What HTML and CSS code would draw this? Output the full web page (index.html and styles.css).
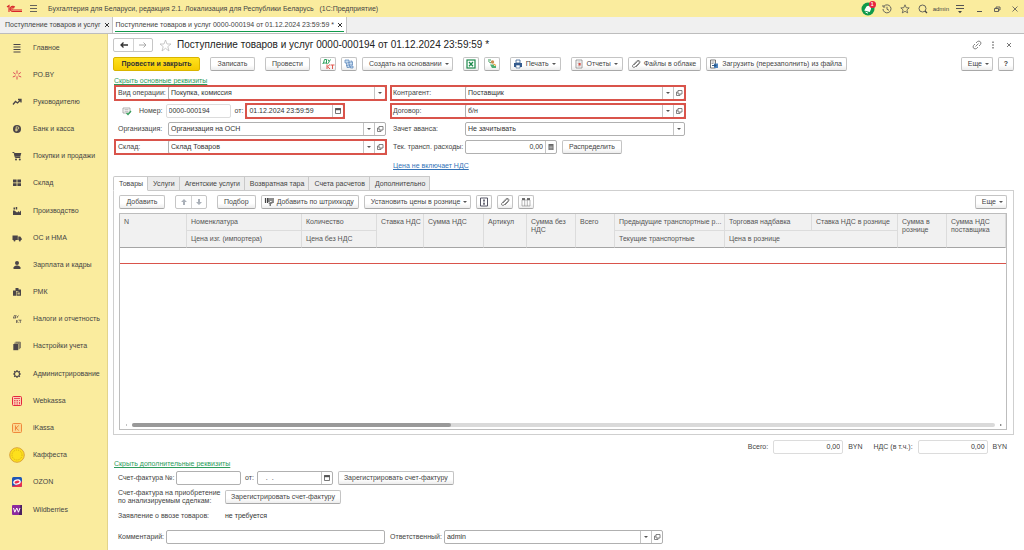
FILE: index.html
```html
<!DOCTYPE html>
<html lang="ru">
<head>
<meta charset="utf-8">
<title>Поступление товаров и услуг</title>
<link rel="stylesheet" href="styles.css">
</head>
<body>
<svg class="sprite" aria-hidden="true">
  <symbol id="open" viewBox="0 0 8 8"><path d="M3 1.500h4v3.500H3zM3 3H1.500v3.500H5V5" fill="none" stroke="#666" stroke-width=".8"/></symbol>
  <symbol id="cal" viewBox="0 0 8 8"><path d="M1.500 1.500h5v5h-5z" fill="none" stroke="#555" stroke-width=".8"/><path d="M1.200 1.200h5.600v2H1.200z" fill="#555"/></symbol>
  <symbol id="clip" viewBox="0 0 10 10"><path d="M3 6l3.500-3.500q1-.8 1.600 0t-.2 1.700L4 8Q2.600 9 1.800 8T2 6l3.500-3.800Q7 .8 8.300 1.700T8.500 4.500L5 8" fill="none" stroke="#777" stroke-width=".9"/></symbol>
  <symbol id="dtkt" viewBox="0 0 14 12"><path d="M2 5h4M2.500 5L3.500 1.500H5.500V5M2 5v1M6 5v1M7 1.500l1.200 2L9.500 1.500M8.200 3.500L7.200 5.500" fill="none" stroke="#2aa05a"/><path d="M6 6.500v4.500M9 6.500L6.500 8.700 9 11M9.500 7h4M11.500 7v4" fill="none" stroke="#e0574d"/></symbol>
</svg>
<div class="app">
  <header class="topbar">
    <svg class="logo" viewBox="0 0 17 10"><path d="M1 3l2-1.500V8M8.800 3.200A2.600 2.600 0 1 0 7 7.500h9M8 4.200A1.200 1.200 0 1 0 7 6h9" fill="none" stroke="#d8232a" stroke-width="1.100"/></svg>
    <svg class="burger" viewBox="0 0 9 9"><path d="M1 1.500h7M1 4.500h7M1 7.500h7" stroke="#555" stroke-width=".9"/></svg>
    <span class="app-name">Бухгалтерия для Беларуси, редакция 2.1. Локализация для Республики Беларусь&nbsp;&nbsp; (1С:Предприятие)</span>
    <div class="top-tools">
      <span class="bell"><svg viewBox="0 0 14 14"><circle cx="7" cy="7" r="6.500" fill="#109a4b"/><path d="M3.200 8.500L5.500 4.500Q7 3 8.800 4.200T10 7L8.800 10z" fill="#fff"/><path d="M4.500 10l2.500 1.200" stroke="#fff"/></svg><b>1</b></span>
      <svg viewBox="0 0 10 10"><path d="M2 2.200A4 4 0 1 1 1 5M1 1v2h2.200M5 2.800V5.300l2 1" fill="none" stroke="#555" stroke-width=".9"/></svg>
      <svg viewBox="0 0 10 10"><path d="M5 .8l1.200 2.900 3 .2-2.300 2 .8 3L5 7.300 2.300 8.900l.8-3-2.300-2 3-.2z" fill="none" stroke="#555" stroke-width=".8"/></svg>
      <svg viewBox="0 0 10 10"><circle cx="4.500" cy="4.500" r="3.500" fill="none" stroke="#555" stroke-width=".9"/><path d="M7 7l2 2" stroke="#444" stroke-width="1.200"/></svg>
      <span class="user">admin</span>
      <svg class="opts" viewBox="0 0 10 10"><path d="M1 1.500h8M1 4.500h8" stroke="#555"/><path d="M3 7h4L5 9.200z" fill="#444"/></svg>
      <svg class="win" viewBox="0 0 8 8"><path d="M2 6.500h5" stroke="#555"/></svg>
      <svg class="win" viewBox="0 0 8 8"><path d="M1.500 3.500h4v3h-4zM3 3.500V2h4v3H5.500" fill="none" stroke="#555" stroke-width=".9"/></svg>
      <svg class="win" viewBox="0 0 8 8"><path d="M1.500 1.500l5 5M6.500 1.500l-5 5" stroke="#555" stroke-width=".8"/></svg>
    </div>
  </header>
  <div class="windows">
    <a class="wtab" href="#">Поступление товаров и услуг<svg viewBox="0 0 6 6"><path d="M1 1l4 4M5 1L1 5" stroke="#333"/></svg></a>
    <a class="wtab current" href="#">Поступление товаров и услуг 0000-000194 от 01.12.2024 23:59:59 *<svg viewBox="0 0 6 6"><path d="M1 1l4 4M5 1L1 5" stroke="#333"/></svg></a>
  </div>
  <div class="body">
    <nav class="side">
      <a href="#"><svg viewBox="0 0 10 10"><path d="M1.500 1.500h7M1.500 4h7M1.500 6.500h7M1.500 9h7" stroke="#4a4548"/></svg>Главное</a>
      <a href="#"><svg viewBox="0 0 10 10"><path d="M5 .5v3.200M5 6.300v3.200M1.200 2.500l2.500 1.700M8.800 2.500L6.300 4.200M.8 7l2.800-1.200M9.200 7L6.400 5.800" stroke="#dc4a58"/></svg>РО.BY</a>
      <a href="#"><svg viewBox="0 0 10 10"><path d="M1 7.500l2.500-3 2 1.500 3-3M6 2.500h3v3" fill="none" stroke="#4a4548" stroke-width="1.300"/></svg>Руководителю</a>
      <a href="#"><svg viewBox="0 0 10 10"><circle cx="5" cy="5" r="4" fill="#4a4548"/><path d="M4.200 7.500V2.800h1.300q1.300 0 1.300 1.200T5.500 5.200H3.200M3.200 6.300h2.600" fill="none" stroke="#faec9e" stroke-width=".7"/></svg>Банк и касса</a>
      <a href="#"><svg viewBox="0 0 10 10"><path d="M.5 1.500h1.600l1.200 5h5" fill="none" stroke="#4a4548"/><path d="M2.300 2h7l-1 3.800H3.200z" fill="#4a4548"/><circle cx="4" cy="8.500" r="1" fill="#4a4548"/><circle cx="7.800" cy="8.500" r="1" fill="#4a4548"/></svg>Покупки и продажи</a>
      <a href="#"><svg viewBox="0 0 10 10"><path d="M1 1.500h3.600v3H1zM5.400 1.500H9v3H5.400zM1 5.200h3.600v2.800H1zM5.400 5.200H9v2.800H5.400z" fill="#4a4548"/></svg>Склад</a>
      <a href="#"><svg viewBox="0 0 10 10"><path d="M1 9V4.500h1.500L5 6.500 7 5v1.500L9 4.500V9z" fill="#4a4548"/><path d="M1.500 1.500h1.500v2H1.500zM3.700 1h1.500v2.500H3.700z" fill="#4a4548"/></svg>Производство</a>
      <a href="#"><svg viewBox="0 0 10 10"><path d="M.5 2.500h5.300v4.500H.5zM6.300 3.500h2L9.700 5.500V7H6.300z" fill="#4a4548"/><circle cx="2.500" cy="7.500" r="1" fill="#4a4548"/><circle cx="7.800" cy="7.500" r="1" fill="#4a4548"/></svg>ОС и НМА</a>
      <a href="#"><svg viewBox="0 0 10 10"><circle cx="5" cy="3" r="2" fill="#4a4548"/><path d="M1.500 9V7.500Q2 6 4.200 5.500h1.600Q8 6 8.500 7.500V9z" fill="#4a4548"/></svg>Зарплата и кадры</a>
      <a href="#"><svg viewBox="0 0 10 10"><path d="M3.500 1h3v3h-3zM1 3.500h3v5.300H1zM4.500 4.500h2V2.500H9v6.300H4.500z" fill="#4a4548"/><path d="M5.500 5.500h2.300v2H5.500z" fill="#c8bd86"/></svg>РМК</a>
      <a href="#"><svg viewBox="0 0 10 10"><path d="M1 4h3M1.500 4l.8-2.500h1.200V4M4.500 1.500l1 1.300 1-1.300M5.500 2.800L5 4M4.500 6v3M6.500 6L5 7.400 6.500 9M7 6.200h2.500M8.300 6.200V9" fill="none" stroke="#4a4548" stroke-width=".7"/></svg>Налоги и отчетность</a>
      <a href="#"><svg viewBox="0 0 10 10"><path d="M1.300 3h5v6.200h-5z" fill="#4a4548"/><path d="M2.300 2.200h4.900v6M3.500 1.200h4.800v6" fill="none" stroke="#4a4548" stroke-width=".8"/></svg>Настройки учета</a>
      <a href="#"><svg viewBox="0 0 10 10"><circle cx="5" cy="5" r="2.500" fill="none" stroke="#4a4548" stroke-width="1.100"/><path d="M5 1v1.500M5 7.500V9M1 5h1.500M7.500 5H9M2.200 2.200l1 1M6.800 6.800l1 1M7.800 2.200l-1 1M3.200 6.800l-1 1" stroke="#4a4548" stroke-width="1.200"/></svg>Администрирование</a>
      <a href="#"><svg viewBox="0 0 10 10"><rect x=".5" y=".5" width="9" height="9" rx="1" fill="#fbd0b4" stroke="#e5263c"/><path d="M2 2.500h6M2 4.500h1.500M4.500 4.500H6M7 4.500h1M2 6.200h1.500M4.500 6.200H6M2 8h1.500M4.500 8H6M7.500 6v2.300" stroke="#e5263c" stroke-width=".8"/></svg>Webkassa</a>
      <a href="#"><svg viewBox="0 0 10 10"><rect x=".5" y=".5" width="9" height="9" rx="1" fill="#fbd890" stroke="#f08a3c"/><path d="M3.500 2.500v5M6.800 2.500L4 5l2.800 2.500" fill="none" stroke="#f08a3c"/></svg>iKassa</a>
      <a href="#"><svg class="coin" viewBox="0 0 16 16"><circle cx="8" cy="8" r="7.300" fill="#fde01c" stroke="#dba43a"/><circle cx="8" cy="8" r="5" fill="none" stroke="#d9ab18" stroke-dasharray="1 1"/></svg>Каффеста</a>
      <a href="#"><svg viewBox="0 0 10 10"><rect width="10" height="10" rx="1.500" fill="#1f56b5"/><path d="M0 8.500Q6 9.500 10 4v4.500Q10 10 8.500 10h-7Q0 10 0 8.500z" fill="#e8304e"/><ellipse cx="5" cy="5" rx="3.200" ry="2" fill="#e8304e" stroke="#fff" stroke-width="1.300" transform="rotate(-15 5 5)"/></svg>OZON</a>
      <a href="#"><svg viewBox="0 0 10 10"><rect width="10" height="10" rx="1" fill="#8b2a9e"/><path d="M8.500 0H10v10H7z" fill="#4b2060"/><path d="M1.500 3l1.300 4.200L4.800 3l1.700 4.200L8 3" fill="none" stroke="#fff"/></svg>Wildberries</a>
    </nav>
    <main class="main">
      <div class="title-row">
        <div class="pair"><button aria-label="Назад"><svg viewBox="0 0 10 8"><path d="M9 4H2M4.500 1.500L2 4l2.500 2.500" fill="none" stroke="#333" stroke-width="1.300"/></svg></button><button aria-label="Вперед"><svg viewBox="0 0 10 8"><path d="M1 4h7M5.500 1.500L8 4 5.500 6.500" fill="none" stroke="#aaa"/></svg></button></div>
        <svg class="star" viewBox="0 0 13 13"><path d="M6.500 1l1.500 4h4l-3.200 2.600L10 12 6.500 9.300 3 12l1.200-4.400L1 5h4z" fill="none" stroke="#bbb" stroke-width=".8"/></svg>
        <h1>Поступление товаров и услуг 0000-000194 от 01.12.2024 23:59:59 *</h1>
        <div class="title-tools">
          <svg viewBox="0 0 10 10"><path d="M4 3L5.500 1.500Q7 .5 8.300 1.700T8.500 4.500L7 6M6 7L4.500 8.500Q3 9.500 1.700 8.300T1.500 5.500L3 4M3.500 6.500l3-3" fill="none" stroke="#666" stroke-width=".8"/></svg>
          <svg viewBox="0 0 10 10"><path d="M5 1.500v1.500M5 4.200v1.500M5 7v1.500" stroke="#666" stroke-width="1.300"/></svg>
          <svg viewBox="0 0 10 10"><path d="M3 3l4 4M7 3L3 7" stroke="#666" stroke-width=".9"/></svg>
        </div>
      </div>
      <div class="commands">
        <button class="btn primary">Провести и закрыть</button>
        <button class="btn w-write">Записать</button>
        <button class="btn w-post">Провести</button>
        <button class="btn icon" aria-label="Проводки"><svg class="dk" viewBox="0 0 14 12"><use href="#dtkt"/></svg></button>
        <button class="btn icon near" aria-label="Структура"><svg viewBox="0 0 10 10"><path d="M1 1h4v3H1zM5 3h3.500v3H5zM3 6h2.500v2.500H3zM6.500 7H9v2H6.500z" fill="#c9def2" stroke="#5582b8" stroke-width=".7"/><path d="M2.500 4v3H3M6.500 2H8v1" fill="none" stroke="#5582b8" stroke-width=".7"/></svg></button>
        <button class="btn near drop">Создать на основании</button>
        <button class="btn icon far" aria-label="Excel"><svg viewBox="0 0 10 10"><rect x="1" y="1" width="8" height="8" fill="#fff" stroke="#1e8a4c" stroke-width="1.200"/><path d="M3 3l4 4.200M7 3L3 7.200" stroke="#1e8a4c" stroke-width="1.300"/></svg></button>
        <button class="btn icon near" aria-label="Ответственные"><svg viewBox="0 0 10 10"><path d="M1 1h3M1.500 2.500L4 4" stroke="#3a9c58"/><circle cx="5.500" cy="3" r="1.700" fill="#c98d52"/><path d="M3 5.500h4V7h2v2H5z" fill="#4fae74"/><path d="M6.500 5l2.500 1.500" stroke="#e3a53d" stroke-width="1.200"/></svg></button>
        <button class="btn pic drop"><svg viewBox="0 0 10 10"><path d="M3 1h4v3H3z" fill="#fff" stroke="#345b8e" stroke-width=".8"/><path d="M1 4h8v4H1z" fill="#345b8e"/><path d="M3 6h4v3H3z" fill="#fff" stroke="#345b8e" stroke-width=".6"/></svg>Печать</button>
        <button class="btn pic drop"><svg viewBox="0 0 10 10"><path d="M2 1h6v8H2z" fill="#fff" stroke="#888" stroke-width=".8"/><path d="M3.500 3h3M3.500 4.700h1M3.500 7h3" stroke="#999" stroke-width=".7"/><path d="M4.500 4h2.200v2.500H4.500z" fill="#d2524a"/></svg>Отчеты</button>
        <button class="btn pic near"><svg viewBox="0 0 10 10"><use href="#clip"/></svg>Файлы в облаке</button>
        <button class="btn pic near"><svg viewBox="0 0 10 10"><path d="M1.500 1h5v8h-5z" fill="#fff" stroke="#555" stroke-width=".8"/><path d="M2.500 3h3M2.500 4.500h2" stroke="#777" stroke-width=".7"/><path d="M5 4.500h4V9H5z" fill="#4b83bf"/><path d="M3 6.500h4M5.500 5L7 6.500 5.500 8" fill="none" stroke="#234e7d" stroke-width=".9"/></svg>Загрузить (перезаполнить) из файла</button>
        <button class="btn drop push">Еще</button>
        <button class="btn help near">?</button>
      </div>
      <a class="toggle" href="#">Скрыть основные реквизиты</a>
      <div class="form">
        <div class="row marked"><label for="op">Вид операции:</label><div class="field"><select id="op"><option>Покупка, комиссия</option></select><i class="arrow"></i></div></div>
        <div class="row marked"><label class="wide" for="contr">Контрагент:</label><div class="field"><select id="contr"><option>Поставщик</option></select><i class="arrow"></i><button aria-label="Открыть"><svg viewBox="0 0 8 8"><use href="#open"/></svg></button></div></div>
        <div class="row number">
          <svg class="posted" viewBox="0 0 10 10"><path d="M1 2h7v5H1z" fill="#fff" stroke="#999" stroke-width=".8"/><path d="M2.500 3.700h4M2.500 5.300h4" stroke="#999" stroke-width=".7"/><path d="M4.500 7l1.500 1.500L9 5" fill="none" stroke="#36a15b" stroke-width="1.300"/></svg>
          <label for="num">Номер:</label><div class="field pale num"><input id="num" value="0000-000194"></div>
          <label class="from" for="date">от:</label>
          <div class="marked date"><div class="field"><input id="date" value="01.12.2024 23:59:59"><button aria-label="Календарь"><svg viewBox="0 0 8 8"><use href="#cal"/></svg></button></div></div>
        </div>
        <div class="row marked"><label class="wide" for="dog">Договор:</label><div class="field"><select id="dog"><option>б/н</option></select><i class="arrow"></i><button aria-label="Открыть"><svg viewBox="0 0 8 8"><use href="#open"/></svg></button></div></div>
        <div class="row"><label for="org">Организация:</label><div class="field"><select id="org"><option>Организация на ОСН</option></select><i class="arrow"></i><button aria-label="Открыть"><svg viewBox="0 0 8 8"><use href="#open"/></svg></button></div></div>
        <div class="row"><label class="wide" for="adv">Зачет аванса:</label><div class="field"><select id="adv"><option>Не зачитывать</option></select><i class="arrow"></i></div></div>
        <div class="row marked"><label for="skl">Склад:</label><div class="field"><select id="skl"><option>Склад Товаров</option></select><i class="arrow"></i><button aria-label="Открыть"><svg viewBox="0 0 8 8"><use href="#open"/></svg></button></div></div>
        <div class="row"><label class="wide" for="tr">Тек. трансп. расходы:</label><div class="field cost"><input id="tr" class="right" value="0,00"><button aria-label="Калькулятор"><svg viewBox="0 0 8 8"><path d="M1.500 1h5v6h-5z" fill="#666"/><path d="M2.300 3.200h3.400M2.300 4.600h3.400M2.300 6h3.400" stroke="#fff" stroke-width=".5"/></svg></button></div><button class="btn spread">Распределить</button></div>
      </div>
      <div class="price"><a href="#">Цена не включает НДС</a></div>
      <div class="tabs" role="tablist">
        <button role="tab" aria-selected="true">Товары</button><button role="tab">Услуги</button><button role="tab">Агентские услуги</button><button role="tab">Возвратная тара</button><button role="tab">Счета расчетов</button><button role="tab">Дополнительно</button>
      </div>
      <section class="panel">
        <div class="commands">
          <button class="btn w-add">Добавить</button>
          <div class="pair"><button aria-label="Вверх"><svg viewBox="0 0 8 8"><path d="M4 1l3 3H5v3H3V4H1z" fill="#aab0b8"/></svg></button><button aria-label="Вниз"><svg viewBox="0 0 8 8"><path d="M4 7L1 4h2V1h2v3h2z" fill="#aab0b8"/></svg></button></div>
          <button class="btn">Подбор</button>
          <button class="btn pic near"><svg viewBox="0 0 10 10"><path d="M1.500 1v5M3.500 1v5M5 1v4M7 1v3M9 1v5" stroke="#444" stroke-width="1.200"/><path d="M4 6l4-1.500 1 1.500-2 1v2H5.500V7z" fill="#777"/></svg>Добавить по штрихкоду</button>
          <button class="btn near drop">Установить цены в рознице</button>
          <button class="btn icon near" aria-label="Изменить"><svg viewBox="0 0 10 10"><path d="M1.500 1h7v8h-7z" fill="#fff" stroke="#445" stroke-width=".9"/><path d="M5 2.500v1.700M5 6v1.700" stroke="#445" stroke-width="1.500"/><path d="M4 5h2" stroke="#445" stroke-width=".6"/></svg></button>
          <button class="btn icon near" aria-label="Файлы"><svg viewBox="0 0 10 10"><use href="#clip"/></svg></button>
          <button class="btn icon near" aria-label="Колонки"><svg viewBox="0 0 10 10"><path d="M1 3h8v6H1zM3.700 3v6M6.300 3v6" fill="none" stroke="#888" stroke-width=".6"/><path d="M1 2h3M6 2h3" stroke="#444" stroke-width="1.600"/></svg></button>
          <button class="btn drop push">Еще</button>
        </div>
        <div class="grid">
          <table>
            <colgroup><col class="c67"><col class="c115"><col class="c75"><col class="c47"><col class="c60"><col class="c43"><col class="c49"><col class="c39"><col class="c110"><col class="c87"><col class="c86"><col class="c49"><col></colgroup>
            <thead>
              <tr><th rowspan="2">N</th><th>Номенклатура</th><th>Количество</th><th rowspan="2">Ставка НДС</th><th rowspan="2">Сумма НДС</th><th rowspan="2">Артикул</th><th rowspan="2">Сумма без НДС</th><th rowspan="2">Всего</th><th>Предыдущие транспортные р...</th><th>Торговая надбавка</th><th>Ставка НДС в рознице</th><th rowspan="2">Сумма в рознице</th><th rowspan="2">Сумма НДС поставщика</th></tr>
              <tr><th>Цена изг. (импортера)</th><th>Цена без НДС</th><th>Текущие транспортные</th><th colspan="2">Цена в рознице</th></tr>
            </thead>
            <tbody><tr><td colspan="13"></td></tr></tbody>
          </table>
          <div class="scroll"><i class="left"></i><div class="track"><div class="thumb"></div></div><i class="rt"></i></div>
        </div>
      </section>
      <div class="totals">
        <label for="sum">Всего:</label><div class="field pale"><input id="sum" class="right" value="0,00"></div><span>BYN</span>
        <label class="vat" for="vat">НДС (в т.ч.):</label><div class="field pale"><input id="vat" class="right" value="0,00"></div><span>BYN</span>
      </div>
      <a class="toggle" href="#">Скрыть дополнительные реквизиты</a>
      <div class="extra">
        <div class="row"><label class="l58" for="sf">Счет-фактура №:</label><div class="field sf"><input id="sf"></div><label class="from" for="sfd">от:</label><div class="field sfd"><input id="sfd" value=" .  ."><button aria-label="Календарь"><svg viewBox="0 0 8 8"><use href="#cal"/></svg></button></div><button class="btn spread">Зарегистрировать счет-фактуру</button></div>
        <div class="row"><span class="l107">Счет-фактура на приобретение<br>по анализируемым сделкам:</span><button class="btn">Зарегистрировать счет-фактуру</button></div>
        <div class="row"><span class="l107">Заявление о ввозе товаров:</span><span class="dark">не требуется</span></div>
        <div class="row last"><label class="l48" for="com">Комментарий:</label><div class="field line"><input id="com"></div><label class="resp" for="resp">Ответственный:</label><div class="field line"><select id="resp"><option>admin</option></select><i class="arrow"></i><button aria-label="Открыть"><svg viewBox="0 0 8 8"><use href="#open"/></svg></button></div></div>
      </div>
    </main>
  </div>
</div>
</body>
</html>
```

FILE: styles.css
```css
* { box-sizing: border-box; }
body { margin: 0; font: 7px/8px "Liberation Sans", Arial, sans-serif; color: #444; background: #fff; }
button, input, select { font: inherit; color: inherit; margin: 0; padding: 0; border: 0; background: none; border-radius: 0; outline: 0; }
svg { flex: none; width: 10px; height: 10px; }
a { color: inherit; text-decoration: none; }
.sprite { position: absolute; width: 0; height: 0; }
.app { display: flex; flex-direction: column; min-height: 100vh; }

.topbar { display: flex; align-items: center; height: 17px; padding: 0 5px 0 6px; background: #faec9e; }
.topbar .logo { width: 17px; }
.topbar .burger { width: 9px; height: 9px; margin: 0 10px 0 6px; }
.top-tools { display: flex; align-items: center; gap: 8px; margin-left: auto; }
.user { margin: 0 -2px 0 -3px; font-size: 6px; }
.top-tools .win { width: 8px; height: 8px; margin-left: 2px; }
.bell { position: relative; display: flex; margin-right: -1px; }
.bell svg { width: 14px; height: 14px; }
.bell b { position: absolute; top: -1px; right: -1px; width: 7px; height: 7px; border-radius: 50%; background: #e8233f; color: #fff; font-size: 5px; line-height: 7px; text-align: center; }

.windows { display: flex; height: 17px; background: #f0f0f0; border-bottom: 1px solid #bdbdbd; }
.wtab { display: flex; align-items: center; gap: 3px; padding: 0 2px 0 5px; border-right: 1px solid #c4c4c4; white-space: nowrap; }
.wtab svg { width: 6px; height: 6px; }
.wtab.current { padding: 0 3px; background: linear-gradient(#109a4b, #109a4b) center bottom 1px / calc(100% - 4px) 1px no-repeat #fff; }

.body { display: flex; flex: 1; }
.side { display: flex; flex-direction: column; width: 108px; flex: none; padding-bottom: 27px; background: #faec9e; border-right: 1px solid #e3d48a; }
.side a { display: flex; flex: 1; align-items: center; gap: 11px; padding-left: 12px; white-space: nowrap; }
.side .coin { width: 16px; height: 16px; margin: 0 -3px; }

.main { display: flex; flex: 1; flex-direction: column; min-width: 0; padding: 4px 10px 6px 5px; }
.title-row { display: flex; align-items: center; height: 14px; }
.title-row h1 { margin: 0 0 0 5px; font-size: 10px; line-height: 12px; font-weight: 400; color: #222; }
.star { width: 13px; height: 13px; margin-left: 6px; }
.title-tools { display: flex; gap: 6px; margin-left: auto; }
.pair { display: flex; height: 14px; border: 1px solid #c6c6c6; border-radius: 2px; }
.pair button { display: flex; align-items: center; justify-content: center; width: 19px; }
.pair button + button { border-left: 1px solid #d2d2d2; }
.pair svg { height: 8px; }
.commands .pair button { width: 15px; }

.commands { display: flex; align-items: center; margin-top: 5px; white-space: nowrap; }
.btn { display: flex; align-items: center; justify-content: center; gap: 3px; height: 14px; padding: 0 6px; border: 1px solid #c4c4c4; border-bottom-color: #a8a8a8; border-radius: 2px; background: linear-gradient(#fff 60%, #ededed); white-space: nowrap; }
.btn.drop { padding: 0 3px 0 6px; }
.btn.pic { padding: 0 4px 0 2px; }
.commands > * { margin-left: 10px; }
.commands > :first-child { margin-left: 0; }
.commands > .near { margin-left: 5px; }
.commands > .push { margin-left: auto; }
.btn.primary { width: 87px; border-color: #d9b400; background: linear-gradient(#ffe11e, #f5cb00); color: #333; font-weight: 700; }
.btn.w-write, .btn.w-post { width: 45px; }
.btn.w-add { width: 46px; }
.btn.icon { width: 16px; padding: 0; }
.btn .dk { width: 14px; height: 12px; }
.btn.help { width: 16px; padding: 0; font-weight: 700; }
.drop::after { content: ""; border: 2px solid transparent; border-top-color: #555; border-bottom: 0; }

.toggle { align-self: flex-start; margin: 6px 0 0 1px; color: #2d9c5c; text-decoration: underline; }
.form { display: grid; grid-template-columns: 271px 294px; gap: 4px 5px; margin: 1px 0 0 2px; }
.row { display: flex; align-items: center; height: 14px; padding-left: 3px; white-space: nowrap; }
.row > label { flex: none; width: 50px; }
.row > label.wide { width: 72px; }
.form .row:nth-child(even) { padding-left: 2px; }
.marked { outline: 2px solid #d9544b; outline-offset: -1px; }
.field { display: flex; flex: 1; min-width: 0; height: 14px; border: 1px solid #b0b0b0; border-radius: 2px; background: #fff; color: #333; }
.field.pale { border-color: #dcdcdc; }
.field input, .field select { flex: 1; width: 0; min-width: 0; padding-left: 2px; appearance: none; }
.field .right { text-align: right; padding-right: 2px; }
.field button { display: flex; align-items: center; justify-content: center; width: 11px; border-left: 1px solid #c4c4c4; }
.field button svg { width: 8px; height: 8px; }
.arrow { display: flex; align-items: center; justify-content: center; width: 11px; border-left: 1px solid #c4c4c4; pointer-events: none; }
.arrow::after { content: ""; border: 2px solid transparent; border-top-color: #555; border-bottom: 0; }
.number .posted { margin-left: 4px; }
.row.number > label { width: auto; margin: 0 3px 0 7px; }
.field.num { flex: none; width: 65px; }
.row > label.from, .row.number > label.from { width: auto; margin: 0 3px 0 4px; }
.date { width: 98px; }
.field.cost { flex: none; width: 92px; }
.btn.spread { margin-left: 5px; }
.price { margin: 8px 0 6px 280px; color: #3473b7; }
.price a { text-decoration: underline; }

.tabs { display: flex; height: 15px; position: relative; z-index: 1; margin-bottom: -1px; }
.tabs button { padding: 0 4px 0 5px; border: 1px solid #c9c9c9; border-left-width: 0; background: #ececec; white-space: nowrap; }
.tabs button:first-child { border-left-width: 1px; border-radius: 2px 0 0 0; border-bottom-color: #fff; background: #fff; }
.panel { display: flex; flex: 1; flex-direction: column; padding: 0 6px 4px 5px; border: 1px solid #cfcfcf; }
.panel .commands { margin-top: 4px; }
.grid { display: flex; flex: 1; flex-direction: column; margin-top: 4px; border: 1px solid #bdbdbd; }
table { width: 100%; table-layout: fixed; border-collapse: separate; border-spacing: 0; }
th { height: 17px; padding: 4px 1px 0 4px; border-right: 1px solid #dcdcdc; border-bottom: 1px solid #dcdcdc; background: #f1f1f1; color: #555; font-weight: 400; text-align: left; vertical-align: top; white-space: nowrap; }
th[rowspan] { white-space: normal; border-bottom-color: #a5a5a5; }
thead tr:last-child th { border-bottom-color: #a5a5a5; }
td { height: 16px; padding: 0; border-bottom: 1px solid #d9544b; }
.c67 { width: 67px; } .c115 { width: 115px; } .c75 { width: 75px; } .c47 { width: 47px; } .c60 { width: 60px; } .c43 { width: 43px; } .c49 { width: 49px; } .c39 { width: 39px; } .c110 { width: 110px; } .c87 { width: 87px; } .c86 { width: 86px; }
.scroll { display: flex; align-items: center; gap: 5px; margin-top: auto; padding: 2px 3px 2px 5px; }
.track { flex: 1; height: 4px; border-radius: 2px; background: #dadada; }
.thumb { width: 37%; height: 4px; border-radius: 2px; background: #999; }
.scroll i { border: 1px solid transparent; }
.scroll .left { border-right-color: #888; }
.scroll .rt { border-left: 2px solid #666; }

.totals { display: flex; align-items: center; gap: 5px; margin: 5px 7px 0 0; justify-content: flex-end; }
.totals .field { flex: none; width: 70px; }
.totals .vat { margin-left: 6px; }
.extra { display: flex; flex-direction: column; gap: 5px; margin: 3px 0 0 2px; }
.extra .row > .l58 { width: 58px; }
.extra .l107 { flex: none; width: 107px; }
.extra .row > .l48 { width: 48px; }
.extra .row > .resp { width: auto; margin: 0 2px 0 5px; }
.extra .btn { padding: 0 5px; }
.field.sf { flex: none; width: 65px; }
.field.sfd { flex: none; width: 76px; }
.field.sfd input { padding-left: 6px; white-space: pre; }
.field.line { flex: none; width: 219px; }
.dark { color: #333; }
.extra .last { margin-top: 2px; }
```
